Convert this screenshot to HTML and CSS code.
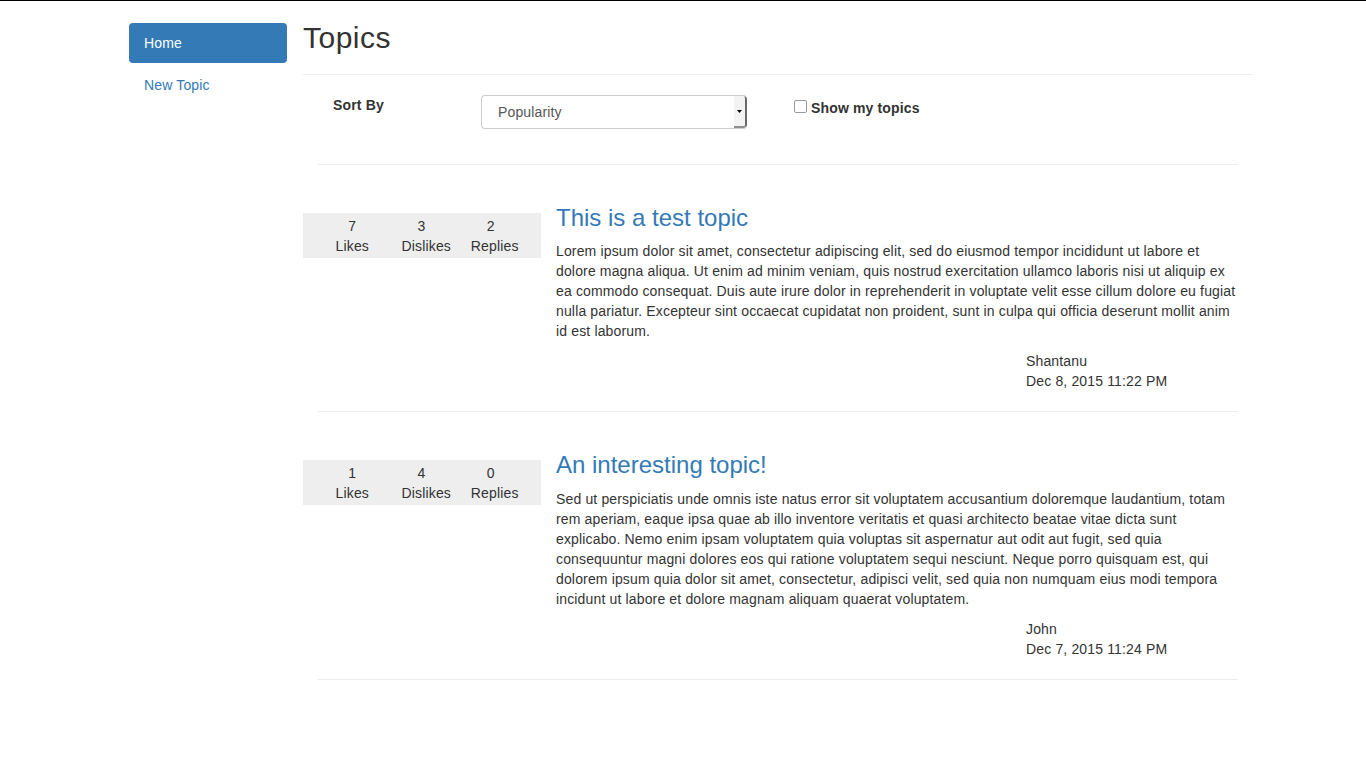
FILE: index.html
```html
<!DOCTYPE html>
<html lang="en">
<head>
<meta charset="utf-8">
<title>Topics</title>
<link rel="stylesheet" href="styles.css">
</head>
<body>
<div class="layout">
  <nav class="sidebar">
    <ul class="pills">
      <li class="active"><a href="#">Home</a></li>
      <li><a href="#">New Topic</a></li>
    </ul>
  </nav>
  <main class="main">
    <h2 class="page-title">Topics</h2>
    <hr class="rule">
    <div class="content">
      <div class="filter-row">
        <label class="sort-label">Sort By</label>
        <div class="select">
          <span class="select-text">Popularity</span>
          <span class="select-btn"><svg width="5" height="3" viewBox="0 0 5 3"><path d="M0 0H5L2.5 3Z" fill="#000"/></svg></span>
        </div>
        <label class="check"><span class="box"></span>Show my topics</label>
      </div>
      <hr class="rule">

      <div class="topic">
        <div class="stats">
          <div class="stat s1"><div class="num">7</div><div>Likes</div></div>
          <div class="stat s2"><div class="num">3</div><div>Dislikes</div></div>
          <div class="stat s3"><div class="num">2</div><div>Replies</div></div>
        </div>
        <div class="topic-body">
          <h3 class="topic-title"><a href="#">This is a test topic</a></h3>
          <p>Lorem ipsum dolor sit amet, consectetur adipiscing elit, sed do eiusmod tempor incididunt ut labore et dolore magna aliqua. Ut enim ad minim veniam, quis nostrud exercitation ullamco laboris nisi ut aliquip ex ea commodo consequat. Duis aute irure dolor in reprehenderit in voluptate velit esse cillum dolore eu fugiat nulla pariatur. Excepteur sint occaecat cupidatat non proident, sunt in culpa qui officia deserunt mollit anim id est laborum.</p>
          <div class="meta">Shantanu<br>Dec 8, 2015 11:22 PM</div>
        </div>
      </div>
      <hr class="rule">

      <div class="topic">
        <div class="stats">
          <div class="stat s1"><div class="num">1</div><div>Likes</div></div>
          <div class="stat s2"><div class="num">4</div><div>Dislikes</div></div>
          <div class="stat s3"><div class="num">0</div><div>Replies</div></div>
        </div>
        <div class="topic-body">
          <h3 class="topic-title"><a href="#">An interesting topic!</a></h3>
          <p>Sed ut perspiciatis unde omnis iste natus error sit voluptatem accusantium doloremque laudantium, totam rem aperiam, eaque ipsa quae ab illo inventore veritatis et quasi architecto beatae vitae dicta sunt explicabo. Nemo enim ipsam voluptatem quia voluptas sit aspernatur aut odit aut fugit, sed quia consequuntur magni dolores eos qui ratione voluptatem sequi nesciunt. Neque porro quisquam est, qui dolorem ipsum quia dolor sit amet, consectetur, adipisci velit, sed quia non numquam eius modi tempora incidunt ut labore et dolore magnam aliquam quaerat voluptatem.</p>
          <div class="meta">John<br>Dec 7, 2015 11:24 PM</div>
        </div>
      </div>
      <hr class="rule">
    </div>
  </main>
</div>
</body>
</html>
```

FILE: styles.css
```css
* { box-sizing: border-box; }
html, body { margin: 0; padding: 0; }
body {
  font-family: "Liberation Sans", Arial, Helvetica, sans-serif;
  font-size: 14px;
  line-height: 20px;
  letter-spacing: 0.15px;
  color: #333;
  background: #fff;
  border-top: 1px solid #000;
}
.layout {
  display: flex;
  align-items: flex-start;
  padding-left: 129px;
}
.sidebar {
  width: 158px;
  flex: none;
  padding-top: 22px;
}
.pills { list-style: none; margin: 0; padding: 0; }
.pills li + li { margin-top: 2px; }
.pills a {
  display: block;
  padding: 10px 15px;
  border-radius: 4px;
  color: #337ab7;
  text-decoration: none;
}
.pills .active a { background: #337ab7; color: #fff; }

.main { width: 950px; flex: none; margin-left: 16px; }
.page-title {
  font-size: 30px;
  line-height: 33px;
  font-weight: 400;
  letter-spacing: 0.5px;
  margin: 20px 0 10px;
  color: #333;
}
.rule {
  border: 0;
  border-top: 1px solid #eee;
  height: 0;
  margin: 20px 0;
}
.content { padding: 0 15px; }

.filter-row {
  display: flex;
  align-items: flex-start;
  padding: 0 0 15px 15px;
}
.sort-label { width: 148px; flex: none; font-weight: bold; }
.select {
  width: 266px;
  height: 34px;
  flex: none;
  display: flex;
  border: 1px solid #ccc;
  border-right: 0;
  border-radius: 4px;
  background: #fff;
  overflow: hidden;
}
.select-text { flex: 1; padding: 6px 16px; color: #555; }
.select-btn {
  width: 13px;
  flex: none;
  display: flex;
  align-items: center;
  justify-content: center;
  background: #f3f3f3;
  border-right: 2px solid #6a6a6a;
  border-bottom: 2px solid #8f8f8f;
  border-radius: 0 3px 3px 0;
  padding-top: 1px;
}
.select-btn svg { display: block; }
.check {
  display: flex;
  align-items: flex-start;
  margin-left: 47px;
  padding-top: 3px;
  font-weight: bold;
}
.box {
  width: 13px;
  height: 13px;
  margin: 2px 4px 0 0;
  border: 1px solid #9a9a9a;
  border-radius: 2px;
  background: #fff;
}

.topic {
  display: flex;
  align-items: flex-start;
  margin: 0 -15px;
}
.stats {
  width: 238px;
  flex: none;
  margin-top: 28px;
  padding: 3px 0 2px;
  background: #eee;
  display: flex;
}
.stat { text-align: center; }
.s1 { width: 98.6px; }
.s2 { width: 47.8px; }
.s3 { width: 90.6px; }
.s2 .num, .s3 .num { padding-right: 8px; }

.topic-body { flex: 1; padding: 0 15px; }
.topic-title {
  font-size: 24px;
  line-height: 26.4px;
  font-weight: 400;
  letter-spacing: 0;
  margin: 20px 0 10px;
}
.topic-title a { color: #337ab7; text-decoration: none; }
.topic-body p { margin: 0 0 10px; }
.meta { margin-left: 470px; }
```
